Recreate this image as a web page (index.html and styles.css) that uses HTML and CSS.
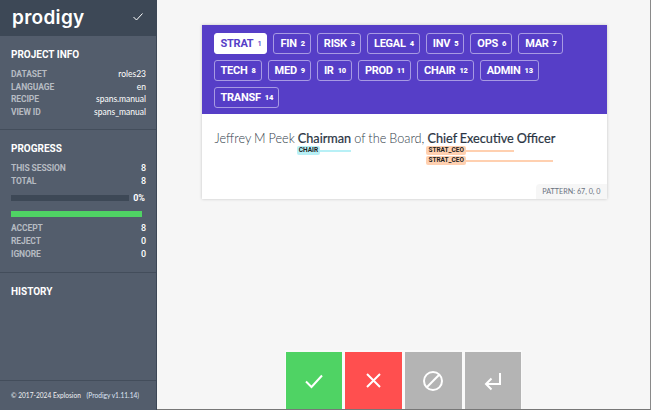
FILE: index.html
```html
<!DOCTYPE html>
<html lang="en">
<head>
    <meta charset="UTF-8">
    <title>Prodigy</title>
    <link rel="stylesheet" href="styles.css">
</head>
<body>
    <div class="app">
        <aside class="sidebar">
            <header class="brand">
                <span class="logo">prodigy</span>
                <svg class="brand-check" width="10" height="8" viewBox="0 0 10 8"><path d="M0.5 4 L3.5 7 L9.5 0.5" fill="none" stroke="#fff" stroke-width="1"/></svg>
            </header>
            <section class="panel panel-info">
                <h2>Project Info</h2>
                <div class="row"><span class="key">Dataset</span><span class="val">roles23</span></div>
                <div class="row"><span class="key">Language</span><span class="val">en</span></div>
                <div class="row"><span class="key">Recipe</span><span class="val">spans.manual</span></div>
                <div class="row"><span class="key">View ID</span><span class="val">spans_manual</span></div>
            </section>
            <section class="panel panel-progress">
                <h2>Progress</h2>
                <div class="row"><span class="key">This session</span><span class="val num">8</span></div>
                <div class="row"><span class="key">Total</span><span class="val num">8</span></div>
                <div class="progress">
                    <div class="progress-track"></div>
                    <span class="progress-pct">0%</span>
                </div>
                <div class="answers-bar"></div>
                <div class="row"><span class="key">Accept</span><span class="val num">8</span></div>
                <div class="row"><span class="key">Reject</span><span class="val num">0</span></div>
                <div class="row"><span class="key">Ignore</span><span class="val num">0</span></div>
            </section>
            <section class="panel panel-history">
                <h2>History</h2>
            </section>
            <footer class="credit">© 2017-2024 Explosion <span class="version">(Prodigy v1.11.14)</span></footer>
        </aside>
        <main class="main">
            <div class="card">
                <div class="labels">
                    <span class="label label-active">STRAT<b>1</b></span>
                    <span class="label">FIN<b>2</b></span>
                    <span class="label">RISK<b>3</b></span>
                    <span class="label">LEGAL<b>4</b></span>
                    <span class="label">INV<b>5</b></span>
                    <span class="label">OPS<b>6</b></span>
                    <span class="label">MAR<b>7</b></span>
                    <span class="label">TECH<b>8</b></span>
                    <span class="label">MED<b>9</b></span>
                    <span class="label">IR<b>10</b></span>
                    <span class="label">PROD<b>11</b></span>
                    <span class="label">CHAIR<b>12</b></span>
                    <span class="label">ADMIN<b>13</b></span>
                    <span class="label">TRANSF<b>14</b></span>
                </div>
                <div class="content">
                    <div class="tokens">Jeffrey M Peek <span class="token-span">Chairman<span class="span-line line-chair"></span><span class="span-tag tag-chair">CHAIR</span></span> of the Board, <span class="token-span">Chief Executive<span class="span-line line-ceo"></span><span class="span-tag tag-ceo">STRAT_CEO</span><span class="span-line line-ceo line-second line-long"></span><span class="span-tag tag-ceo tag-second">STRAT_CEO</span></span><span class="token-span"> Officer</span></div>
                    <div class="meta">PATTERN: 67, 0, 0</div>
                </div>
            </div>
            <div class="actions">
                <button class="action action-accept" type="button">
                    <svg width="20" height="20" viewBox="0 0 20 20"><path d="M2 10.5 L7.5 16 L18 4.5" fill="none" stroke="#fff" stroke-width="2"/></svg>
                </button>
                <button class="action action-reject" type="button">
                    <svg width="20" height="20" viewBox="0 0 20 20"><path d="M4 3 L17 16 M17 3 L4 16" fill="none" stroke="#fff" stroke-width="2"/></svg>
                </button>
                <button class="action action-ignore" type="button">
                    <svg width="22" height="22" viewBox="0 0 22 22"><circle cx="11" cy="11" r="9" fill="none" stroke="#fff" stroke-width="2"/><path d="M4.8 17.2 L17.2 4.8" stroke="#fff" stroke-width="2"/></svg>
                </button>
                <button class="action action-undo" type="button">
                    <svg width="20" height="20" viewBox="0 0 20 20"><path d="M17 2 V13 H3 M8.5 7.5 L3 13 L8.5 18.5" fill="none" stroke="#fff" stroke-width="2"/></svg>
                </button>
            </div>
        </main>
    </div>
</body>
</html>
```
FILE: styles.css
```css
* {
    box-sizing: border-box;
}
html, body {
    margin: 0;
    height: 100%;
    overflow: hidden;
}
body {
    font-family: "Lato", "Liberation Sans", sans-serif;
    background-color: #f6f6f6;
}
.app {
    display: flex;
    height: 410px;
}

/* sidebar */
.sidebar {
    width: 157px;
    flex: none;
    display: flex;
    flex-direction: column;
    background-color: #535d6c;
    border-right: 1px solid #3c4756;
    color: #fff;
}
.brand {
    height: 36px;
    flex: none;
    display: flex;
    align-items: center;
    justify-content: space-between;
    padding: 0 13px 2px 12px;
    background-color: #3d4856;
}
.logo {
    font-family: "Inter", "Open Sans", sans-serif;
    font-size: 19px;
    font-weight: 600;
    letter-spacing: 0.3px;
}
.panel {
    padding: 13px 10px 0 11px;
    border-bottom: 1px solid #434d5b;
}
.panel h2 {
    margin: 0 0 7px;
    font-family: "Roboto", sans-serif;
    font-size: 10px;
    line-height: 12px;
    font-weight: 700;
    letter-spacing: 0;
    text-transform: uppercase;
}
.panel-info {
    height: 94px;
}
.panel-progress {
    height: 143px;
}
.panel-history {
    flex: 1;
}
.row {
    display: flex;
    justify-content: space-between;
    align-items: center;
    height: 12.6px;
}
.key {
    font-family: "Roboto", sans-serif;
    font-size: 8.5px;
    font-weight: 700;
    letter-spacing: -0.1px;
    text-transform: uppercase;
    color: #b6bbc2;
}
.val {
    font-size: 8.5px;
}
.num {
    font-family: "Roboto", sans-serif;
    font-size: 9px;
    font-weight: 500;
}
.progress {
    display: flex;
    align-items: center;
    justify-content: space-between;
    margin-top: 5px;
    height: 12px;
}
.progress-track {
    width: 118px;
    height: 6px;
    background-color: #3d4856;
}
.progress-pct {
    font-family: "Roboto", sans-serif;
    font-size: 9px;
    font-weight: 700;
    padding-right: 1px;
}
.answers-bar {
    width: 131px;
    height: 6px;
    margin: 7px 0 5px;
    background-color: #4fd364;
}
.credit {
    height: 29px;
    flex: none;
    padding: 10px 0 0 11px;
    font-size: 6.6px;
    color: #f0f1f3;
    white-space: nowrap;
}
.version {
    margin-left: 4px;
    color: #dfe6f5;
}

/* main column */
.main {
    flex: 1;
    display: flex;
    flex-direction: column;
    align-items: center;
    padding-top: 25px;
    padding-left: 1px;
    border-right: 1px solid #8a8a8a;
    border-bottom: 1px solid #777;
}
.card {
    width: 405px;
    height: 174px;
    display: flex;
    flex-direction: column;
    background-color: #fff;
    box-shadow: 0 0 3px rgba(0, 0, 0, 0.2);
}
.labels {
    height: 89px;
    flex: none;
    display: flex;
    flex-wrap: wrap;
    align-content: flex-start;
    gap: 6px;
    padding: 8px 12px 0;
    background-color: #563ec7;
}
.label {
    height: 21px;
    display: flex;
    align-items: center;
    padding: 0 5px 0 6px;
    border: 1px solid #a79ae3;
    border-radius: 3px;
    font-family: "Roboto", sans-serif;
    font-size: 11px;
    font-weight: 700;
    letter-spacing: -0.25px;
    color: #fff;
}
.label b {
    margin-left: 4px;
    font-size: 7.5px;
}
.label-active {
    background-color: #fff;
    border-color: #fff;
    color: #563ec7;
}
.label-active b {
    font-weight: 500;
}
.content {
    flex: 1;
    position: relative;
    padding: 16px 13px 0;
}
.tokens {
    font-size: 12.7px;
    line-height: 17px;
    font-weight: 300;
    word-spacing: -0.4px;
    color: #333d4b;
    white-space: nowrap;
}
.token-span {
    position: relative;
    color: #2a3442;
    font-weight: 400;
    -webkit-text-stroke: 0.2px #2a3442;
}
.span-line {
    position: absolute;
    left: 0;
    right: 0;
    height: 2px;
    top: 20px;
}
.line-chair {
    background-color: #b8f0f6;
}
.line-ceo {
    background-color: #ffd0b0;
}
.line-second {
    top: 30px;
}
.line-long {
    right: -39px;
}
.span-tag {
    position: absolute;
    left: -1px;
    height: 9px;
    padding: 0 2px;
    border-radius: 2px;
    font-family: "Roboto", sans-serif;
    font-size: 6.5px;
    line-height: 9px;
    font-weight: 700;
    word-spacing: 0;
    color: #222;
    -webkit-text-stroke: 0;
    top: 16px;
}
.tag-chair {
    background-color: #b8f0f6;
}
.tag-ceo {
    background-color: #ffd0b0;
}
.tag-second {
    top: 26px;
}
.meta {
    position: absolute;
    right: 0;
    bottom: 0;
    padding: 3px 6px;
    background-color: #f6f6f6;
    border-top-left-radius: 4px;
    font-size: 7.2px;
    line-height: 9px;
    color: #6a7280;
}
.actions {
    margin-top: auto;
    margin-right: 2px;
    display: flex;
    gap: 3px;
    padding: 2px 1px 0;
    background-color: #fafafa;
}
.action {
    width: 57px;
    height: 57px;
    display: flex;
    align-items: center;
    justify-content: center;
    padding: 0;
    border: none;
    cursor: pointer;
}
.action-accept, .action-undo {
    width: 56px;
}
.action-accept {
    background-color: #4fd364;
}
.action-reject {
    background-color: #ff4f4f;
}
.action-ignore, .action-undo {
    background-color: #b4b4b4;
}
```
